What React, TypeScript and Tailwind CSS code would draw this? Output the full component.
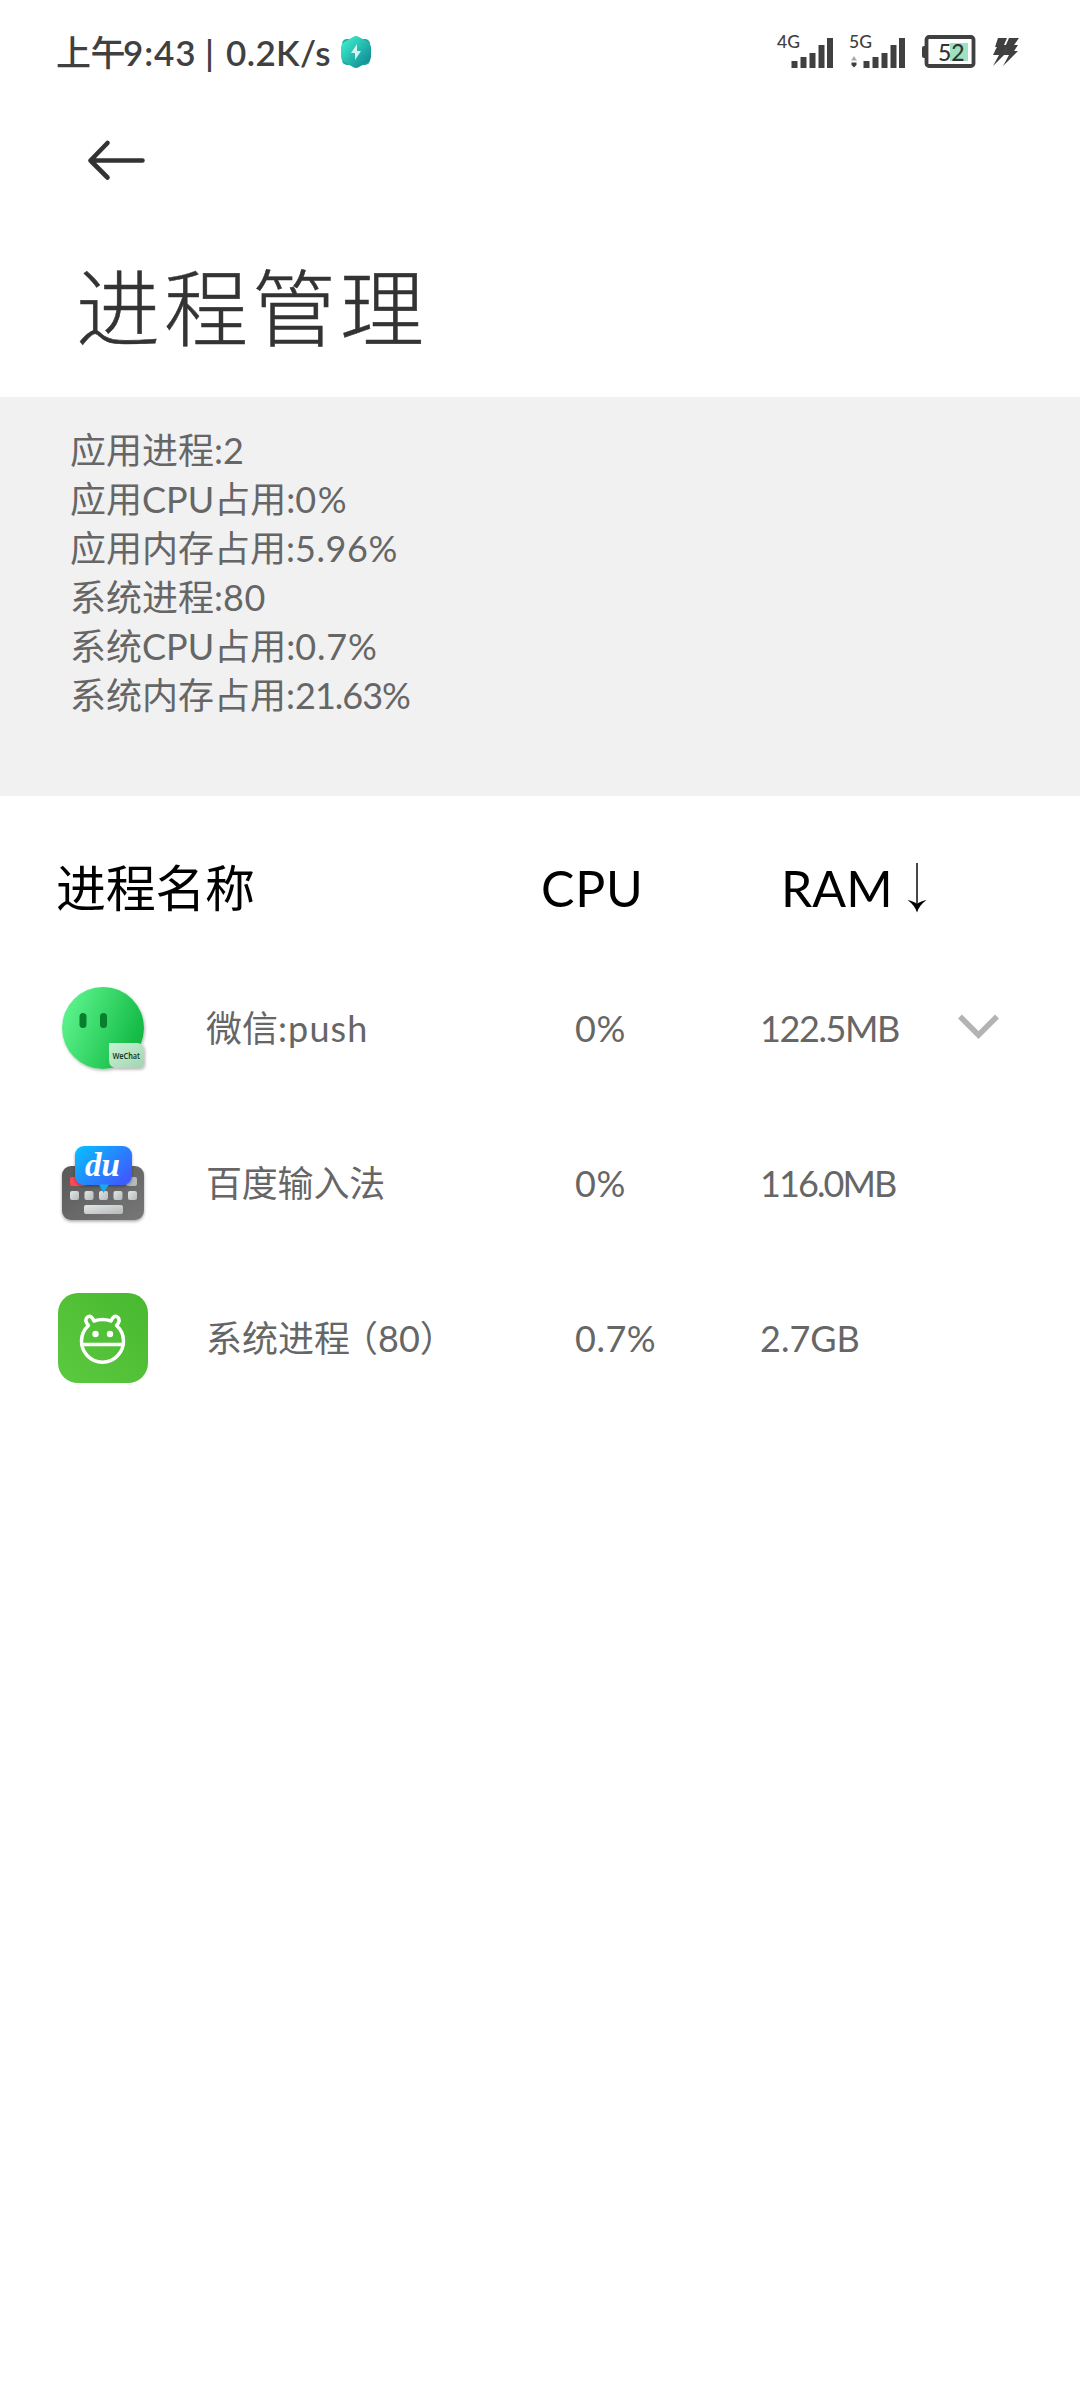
import type { ReactNode } from 'react';

const stats = [
  { label: '应用进程:', value: '2', tracking: '' },
  { label: '应用CPU占用:', value: '0%', tracking: 'tracking-[1.6px]' },
  { label: '应用内存占用:', value: '5.96%', tracking: 'tracking-[0.6px]' },
  { label: '系统进程:', value: '80', tracking: 'tracking-[0.6px]' },
  { label: '系统CPU占用:', value: '0.7%', tracking: 'tracking-[0.9px]' },
  { label: '系统内存占用:', value: '21.63%', tracking: 'tracking-[-1px]' },
];

const processes = [
  {
    name: <>微信<span className="tracking-[1.1px]">:push</span></>,
    cpu: '0%',
    ram: '122.5MB',
    ramTracking: 'tracking-[-1.4px]',
    icon: <WeChatIcon />,
    expandable: true,
  },
  {
    name: <span className="tracking-[-0.2px]">百度输入法</span>,
    cpu: '0%',
    ram: '116.0MB',
    ramTracking: 'tracking-[-1.9px]',
    icon: <BaiduIcon />,
    expandable: false,
  },
  {
    name: <>系统进程<span className="ml-[10px] [font-feature-settings:'halt']">（80）</span></>,
    cpu: '0.7%',
    ram: '2.7GB',
    ramTracking: '',
    icon: <SystemIcon />,
    expandable: false,
  },
];

export default function App() {
  return (
    <div className="min-h-[2400px] w-[1080px] bg-white font-['Lato','Noto_Sans_CJK_SC',sans-serif] text-[#666666]">
      <StatusBar />

      <header>
        <div className="flex h-[112px] items-center pl-[86px]">
          <svg width="60" height="44" viewBox="0 0 60 44" fill="none" stroke="#333" strokeWidth="4.6" strokeLinecap="round" strokeLinejoin="round">
            <path d="M56.5 22.500H4.500M21.500 5L4.500 22.500L21.500 39.500" />
          </svg>
        </div>
        <h1 className="h-[181px] pl-[76px] pt-[42px] text-[84px] leading-[100px] font-light tracking-[4px] text-[#333] [-webkit-text-stroke:0.5px_#333]">进程管理</h1>
      </header>

      <section className="h-[399px] bg-[#f1f1f1] pl-[70px] pt-[29px] text-[36px] leading-[49px]">
        {stats.map((s) => (
          <p key={s.label}>{s.label}<span className={s.tracking}>{s.value}</span></p>
        ))}
      </section>

      <div className="flex h-[154px] items-center pl-[56px] pt-[30px] text-[50px] leading-[60px] text-black">
        <span className="w-[485px] tracking-[-0.3px]">进程名称</span>
        <span className="w-[240px] tracking-[0.8px]">CPU</span>
        <span className="w-[125px]">RAM</span>
        <svg width="22" height="52" viewBox="0 0 22 52">
          <path d="M11 1V42" stroke="#333" strokeWidth="1.8" />
          <path d="M1.500 38Q8 39.500 11 42Q14 39.500 20.500 38Q13 43.500 11 50.500Q9 43.500 1.500 38Z" />
        </svg>
      </div>

      <ul>
        {processes.map((p) => (
          <li key={p.ram} className="flex h-[155px] items-center pl-[48px] text-[36px]">
            <div className="w-[158px]">{p.icon}</div>
            <span className="w-[369px]">{p.name}</span>
            <span className="w-[185px] tracking-[0.5px]">{p.cpu}</span>
            <span className={`w-[197px] ${p.ramTracking}`}>{p.ram}</span>
            {p.expandable && (
              <svg width="42" height="28" viewBox="0 0 42 28" fill="none" stroke="#b3b3b3" strokeWidth="5.500">
                <path d="M3 2.500L21.500 21L40 2.500" />
              </svg>
            )}
          </li>
        ))}
      </ul>
    </div>
  );
}

function StatusBar() {
  return (
    <div className="flex h-[104px] items-center pl-[56px] text-[#404040]">
      <div className="flex w-[284px] items-baseline whitespace-nowrap text-[35px] font-semibold">
        <span className="w-[67px] font-medium tracking-[-0.5px]">上午</span>
        <span className="w-[82px] tracking-[0.9px]">9:43</span>
        <span className="w-[21px]">|</span>
        <span className="tracking-[0.4px]">0.2K/s</span>
      </div>
      <svg width="32" height="34" viewBox="0 0 32 34">
        <defs>
          <linearGradient id="badge" x1="0" y1="0" x2="1" y2="1">
            <stop offset="0.1" stopColor="#3ceccb" />
            <stop offset="1" stopColor="#0b7f8e" />
          </linearGradient>
        </defs>
        <rect x="2" y="4" width="28" height="26" rx="5" fill="#1aa89f" />
        <path d="M13 2Q16 0 19 2L28 7Q31 9 31 12V22Q31 25 28 27L19 32Q16 34 13 32L4 27Q1 25 1 22V12Q1 9 4 7Z" fill="url(#badge)" />
        <path d="M17 9L11 18H15V25L21 16H17Z" fill="#d3f3ee" />
      </svg>

      <div className="flex flex-1 items-center pl-[404px]">
        <Signal label="4G" />
        <div className="w-[14px]" />
        <Signal label="5G" data />
        <svg className="ml-[16px]" width="54" height="34" viewBox="0 0 54 34">
          <rect x="0" y="11" width="6" height="12" rx="2" fill="#404040" />
          <rect x="28" y="8" width="18" height="18" fill="#9fe2c0" />
          <rect x="4.500" y="2" width="47" height="29" rx="2.500" fill="none" stroke="#404040" strokeWidth="3.800" />
          <text x="16" y="25.500" fontSize="23" fontWeight="500" fill="#333">52</text>
        </svg>
        <svg className="ml-[15px]" width="30" height="32" viewBox="0 0 30 32" fill="#404040">
          <path d="M7 2H16L13 9H17L14 15H17L2 30L8 19H2L6 11H4Z" />
          <path d="M18 2H28L23 9H27L23 15H27L12 30L18 19H12L16 11H14Z" />
          <path d="M7 9H26L23 15H4Z" opacity="0.6" />
        </svg>
      </div>
    </div>
  );
}

function Signal({ label, data }: { label: string; data?: boolean }) {
  return (
    <svg width="58" height="36" viewBox="-1 0 58 36" fill="#404040" overflow="visible">
      <text x="0" y="13.500" fontSize="17.500" fontWeight="500">{label}</text>
      <rect x="14.500" y="27" width="6" height="7" />
      <rect x="23.500" y="23" width="6" height="11" />
      <rect x="32.500" y="19" width="6" height="15" />
      <rect x="41.500" y="11" width="6" height="23" />
      <rect x="50" y="4" width="6" height="30" />
      {data && (
        <>
          <path d="M2 26.500L5 22L8 26.500Z" fill="#aaa" />
          <path d="M2.500 28.500H7.500V31L5 33.500L2.500 31Z" />
        </>
      )}
    </svg>
  );
}

function IconFrame({ children }: { children: ReactNode }) {
  return (
    <svg width="110" height="110" viewBox="0 0 110 110">{children}</svg>
  );
}

function WeChatIcon() {
  return (
    <IconFrame>
      <defs>
        <linearGradient id="wx" x1="0" y1="0.300" x2="1" y2="0.700">
          <stop offset="0" stopColor="#5df48d" />
          <stop offset="1" stopColor="#0db53f" />
        </linearGradient>
        <linearGradient id="wxTag" x1="0" y1="0" x2="1" y2="1">
          <stop offset="0" stopColor="#c8f3d5" />
          <stop offset="1" stopColor="#a3d3b3" />
        </linearGradient>
        <filter id="wxShadow" x="-20%" y="-20%" width="140%" height="140%">
          <feDropShadow dx="1" dy="1.500" stdDeviation="1.500" floodOpacity="0.300" />
        </filter>
      </defs>
      <g filter="url(#wxShadow)">
        <circle cx="55" cy="55" r="41" fill="url(#wx)" />
        <path d="M61 70H89Q96 70 96 77V90Q96 95 91 95H69Q61 95 61 87Z" fill="url(#wxTag)" />
      </g>
      <rect x="31.500" y="40" width="7" height="15" rx="3.500" fill="#087f2c" />
      <rect x="52" y="40" width="7" height="15" rx="3.500" fill="#087f2c" />
      <text x="64.500" y="85.500" fontFamily="Noto Sans" fontSize="8" fontWeight="600" fill="#163d22" textLength="27.500" lengthAdjust="spacingAndGlyphs">WeChat</text>
    </IconFrame>
  );
}

function BaiduIcon() {
  return (
    <IconFrame>
      <defs>
        <linearGradient id="board" x1="0" y1="0" x2="1" y2="1">
          <stop offset="0" stopColor="#585858" />
          <stop offset="1" stopColor="#777" />
        </linearGradient>
        <linearGradient id="bubble" x1="0" y1="0" x2="1" y2="0.700">
          <stop offset="0" stopColor="#06c2ff" />
          <stop offset="1" stopColor="#3d5cff" />
        </linearGradient>
        <linearGradient id="keys" x1="0" y1="0" x2="1" y2="1">
          <stop offset="0" stopColor="#e2e6e6" />
          <stop offset="1" stopColor="#b5b9ba" />
        </linearGradient>
        <filter id="bdShadow" x="-20%" y="-20%" width="140%" height="140%">
          <feDropShadow dx="0" dy="1.500" stdDeviation="1.500" floodOpacity="0.350" />
        </filter>
      </defs>
      <rect x="14" y="38" width="82" height="54" rx="9" fill="url(#board)" filter="url(#bdShadow)" />
      <rect x="22" y="49" width="16" height="9" rx="2" fill="#ff4757" />
      <rect x="78" y="49" width="11" height="9" rx="2" fill="#b5b9ba" />
      {[22, 36.500, 51, 65.500, 80].map((x) => (
        <rect key={x} x={x} y="63" width="9" height="9" rx="2" fill="url(#keys)" />
      ))}
      <rect x="36" y="77" width="39" height="9" rx="2" fill="url(#keys)" />
      <rect x="27" y="18" width="57" height="39" rx="9" fill="url(#bubble)" filter="url(#bdShadow)" />
      <path d="M51 56.500L55.500 65L61 56.500Z" fill="#16a9f0" />
      <text x="37" y="48" fontFamily="Liberation Serif" fontSize="33" fontStyle="italic" fontWeight="700" fill="#fff" textLength="35" lengthAdjust="spacingAndGlyphs">du</text>
    </IconFrame>
  );
}

function SystemIcon() {
  return (
    <IconFrame>
      <defs>
        <linearGradient id="sys" x1="0" y1="1" x2="1" y2="0">
          <stop offset="0" stopColor="#5cca40" />
          <stop offset="1" stopColor="#48b830" />
        </linearGradient>
      </defs>
      <rect x="10" y="10" width="90" height="90" rx="20" fill="url(#sys)" />
      <g fill="none" stroke="#fff" strokeWidth="3.500" strokeLinecap="round" strokeLinejoin="round">
        <path d="M40.500 42.500Q36 37.500 39 34.500Q43 31 46 38Q54.500 35 63 38Q66 31 70 34.500Q73 37.500 68.500 42.500A21 21 0 1 1 40.500 42.500Z" />
        <path d="M34 61.500H75" strokeLinecap="butt" />
      </g>
      <circle cx="47.500" cy="51" r="3.200" fill="#fff" />
      <circle cx="62" cy="51" r="3.200" fill="#fff" />
    </IconFrame>
  );
}
